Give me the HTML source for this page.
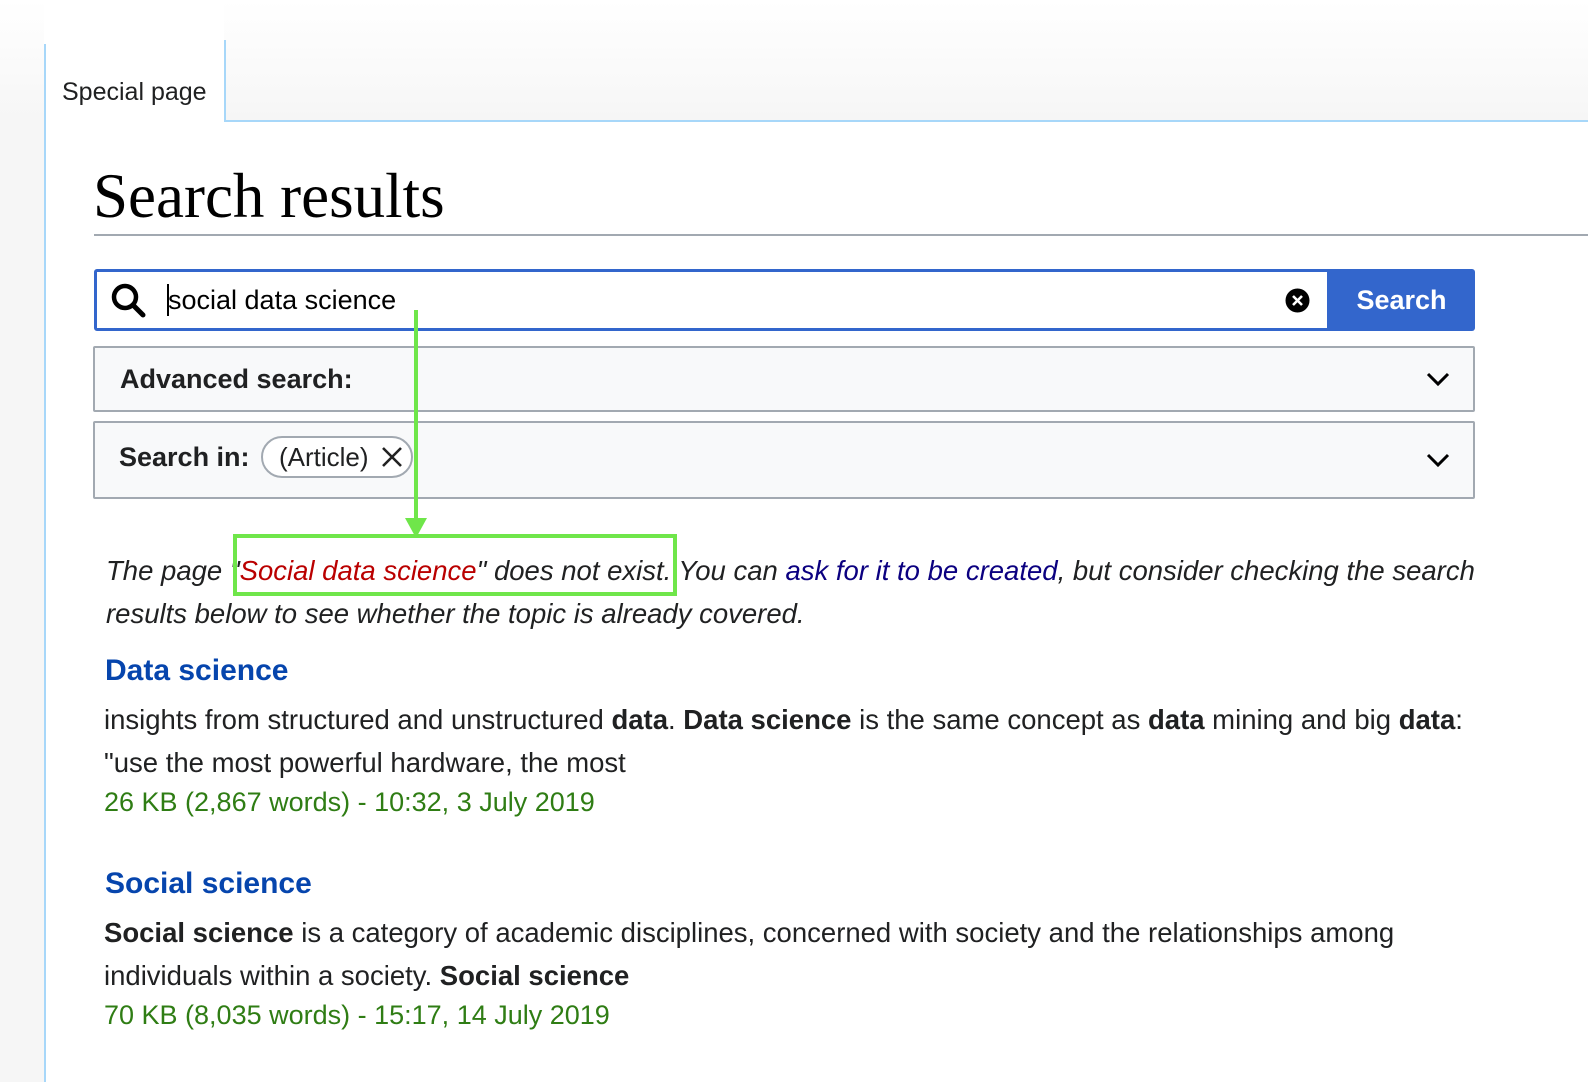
<!DOCTYPE html>
<html><head><style>
body{margin:0;width:1588px;height:1082px;overflow:hidden;background:#fff;font-family:"Liberation Sans",sans-serif;color:#202122;position:relative}
.abs{position:absolute}
</style></head><body>
<div class="abs" style="left:0;top:0;width:44px;height:1082px;background:linear-gradient(#fff 0,#f6f6f6 120px,#f6f6f6)"></div>
<div class="abs" style="left:44px;top:44px;width:2px;height:1038px;background:#a7d7f9"></div>
<div class="abs" style="left:224px;top:0;width:1364px;height:121px;background:linear-gradient(#fff,#f6f6f6)"></div>
<div class="abs" style="left:224px;top:40px;width:2px;height:82px;background:#a7d7f9"></div>
<div class="abs" style="left:224px;top:120px;width:1364px;height:2px;background:#a7d7f9"></div>
<div class="abs" style="left:46px;top:44px;width:178px;height:78px;background:#fff"></div>
<div class="abs" style="left:62px;top:78px;font-size:25px">Special page</div>
<div class="abs" style="left:93px;top:160px;font-family:'Liberation Serif',serif;font-size:63px;color:#000">Search results</div>
<div class="abs" style="left:94px;top:234px;width:1494px;height:2px;background:#a2a9b1"></div>
<div class="abs" style="left:94px;top:269px;width:1236px;height:62px;border:3px solid #3366cc;box-sizing:border-box;border-radius:3px 0 0 3px;background:#fff"></div>
<svg class="abs" style="left:110px;top:282px" width="38" height="38" viewBox="0 0 38 38"><circle cx="15" cy="15" r="11" fill="none" stroke="#000" stroke-width="4.5"/><line x1="23" y1="23" x2="33" y2="33" stroke="#000" stroke-width="5" stroke-linecap="round"/></svg>
<div class="abs" style="left:167px;top:284px;width:2px;height:32px;background:#000"></div>
<div class="abs" style="left:168px;top:285px;font-size:27px;color:#000">social data science</div>
<svg class="abs" style="left:1285px;top:288px" width="25" height="25"><circle cx="12.5" cy="12.5" r="12" fill="#000"/><path d="M8 8L17 17M17 8L8 17" stroke="#fff" stroke-width="2.6"/></svg>
<div class="abs" style="left:1328px;top:269px;width:147px;height:62px;background:#3366cc;color:#fff;font-weight:bold;font-size:27px;text-align:center;line-height:62px;border-radius:0 3px 3px 0">Search</div>
<div class="abs" style="left:93px;top:346px;width:1382px;height:66px;border:2px solid #a2a9b1;box-sizing:border-box;background:#f8f9fa;border-radius:2px"></div>
<div class="abs" style="left:120px;top:364px;font-size:27px;font-weight:bold">Advanced search:</div>
<svg class="abs" style="left:1426px;top:371px" width="24" height="16"><path d="M2 3L12 13L22 3" fill="none" stroke="#000" stroke-width="3"/></svg>
<div class="abs" style="left:93px;top:421px;width:1382px;height:78px;border:2px solid #a2a9b1;box-sizing:border-box;background:#f8f9fa;border-radius:2px"></div>
<div class="abs" style="left:119px;top:442px;font-size:27px;font-weight:bold">Search in:</div>
<div class="abs" style="left:261px;top:436px;width:152px;height:42px;border:2px solid #a2a9b1;box-sizing:border-box;border-radius:21px;background:#fff"></div>
<div class="abs" style="left:279px;top:442px;font-size:26px">(Article)</div>
<svg class="abs" style="left:381px;top:446px" width="22" height="22"><path d="M2 2L20 20M20 2L2 20" stroke="#222" stroke-width="2.6"/></svg>
<svg class="abs" style="left:1426px;top:452px" width="24" height="16"><path d="M2 3L12 13L22 3" fill="none" stroke="#000" stroke-width="3"/></svg>
<div class="abs" style="left:106px;top:549px;width:1400px;font-size:27.5px;font-style:italic;line-height:43px">The page "<span style="color:#ba0000">Social data science</span>" does not exist. You can <span style="color:#0b0080">ask for it to be created</span>, but consider checking the search results below to see whether the topic is already covered.</div>
<div class="abs" style="left:233px;top:534px;width:444px;height:62px;border:4px solid #6fe64a;box-sizing:border-box"></div>
<div class="abs" style="left:414px;top:310px;width:4px;height:214px;background:#6fe64a"></div>
<svg class="abs" style="left:405px;top:518px" width="22" height="20"><path d="M0 0L22 0L11 20Z" fill="#6fe64a"/></svg>
<div class="abs" style="left:105px;top:654px;font-size:30px;font-weight:bold;color:#0645ad">Data science</div>
<div class="abs" style="left:104px;top:698px;width:1420px;font-size:27.5px;line-height:43px">insights from structured and unstructured <b>data</b>. <b>Data science</b> is the same concept as <b>data</b> mining and big <b>data</b>: "use the most powerful hardware, the most</div>
<div class="abs" style="left:104px;top:787px;font-size:27px;color:#2f7d14">26 KB (2,867 words) - 10:32, 3 July 2019</div>
<div class="abs" style="left:105px;top:867px;font-size:30px;font-weight:bold;color:#0645ad">Social science</div>
<div class="abs" style="left:104px;top:911px;width:1420px;font-size:27.5px;line-height:43px"><b>Social science</b> is a category of academic disciplines, concerned with society and the relationships among individuals within a society. <b>Social science</b></div>
<div class="abs" style="left:104px;top:1000px;font-size:27px;color:#2f7d14">70 KB (8,035 words) - 15:17, 14 July 2019</div>
</body></html>
